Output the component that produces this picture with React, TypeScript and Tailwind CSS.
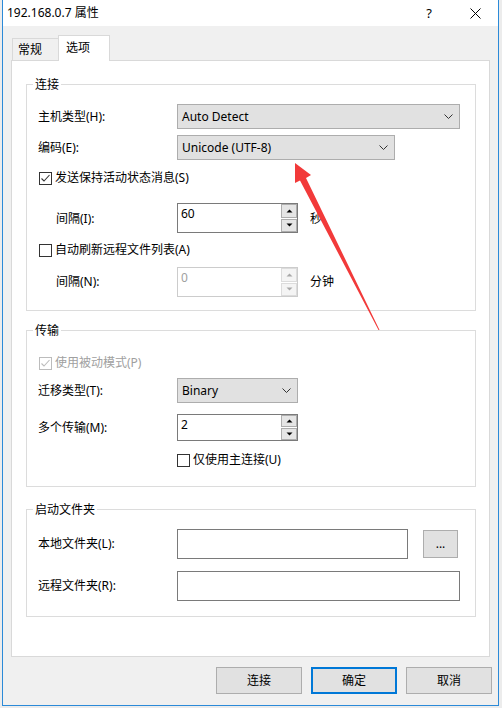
import clsx from "clsx";

const Chevron = ({ color = "#333" }: { color?: string }) => (
  <svg width="9" height="5" viewBox="0 0 9 5" className="shrink-0">
    <path d="M0.5 0.5 L4.5 4.5 L8.5 0.5" fill="none" stroke={color} strokeWidth="1" />
  </svg>
);

function Combo({ value, width }: { value: string; width: string }) {
  return (
    <div
      className={clsx(
        "h-[25px] flex items-center justify-between pl-[4px] pr-[6px] bg-[#e1e1e1] border border-[#adadad]",
        width
      )}
    >
      <span>{value}</span>
      <Chevron />
    </div>
  );
}

function Tri({ up, color }: { up?: boolean; color: string }) {
  return (
    <svg width="7" height="4" viewBox="0 0 7 4">
      <polygon points={up ? "0.5,3.5 3.5,0.5 6.5,3.5" : "0.5,0.5 3.5,3.5 6.5,0.5"} fill={color} />
    </svg>
  );
}

function Spin({ value, height, disabled }: { value: string; height: string; disabled?: boolean }) {
  const btn = disabled
    ? "bg-[#f4f4f4] border-[#dcdcdc]"
    : "bg-[#e5e5e5] border-[#adadad]";
  const tri = disabled ? "#a8a8a8" : "#000";
  return (
    <div
      className={clsx(
        "w-[121px] flex border bg-white",
        height,
        disabled ? "border-[#cccccc] text-[#a0a0a0]" : "border-[#7a7a7a]"
      )}
    >
      <div className="flex-1 pl-[3px] pt-[2px]">{value}</div>
      <div className="w-[16px] flex flex-col gap-[1px]">
        <div className={clsx("flex-1 flex items-center justify-center border", btn)}>
          <Tri up color={tri} />
        </div>
        <div className={clsx("flex-1 flex items-center justify-center border", btn)}>
          <Tri color={tri} />
        </div>
      </div>
    </div>
  );
}

function Check({ checked, disabled, label }: { checked?: boolean; disabled?: boolean; label: string }) {
  const c = disabled ? "#bcbcbc" : "#333";
  return (
    <div className={clsx("flex items-center h-[16px]", disabled && "text-[#a0a0a0]")}>
      <div
        className={clsx(
          "w-[13px] h-[13px] border bg-white flex items-center justify-center",
          disabled ? "border-[#bcbcbc]" : "border-[#333333]"
        )}
      >
        {checked && (
          <svg width="11" height="11" viewBox="0 0 11 11">
            <path d="M1.5 5.5 L4 8 L9.5 2" fill="none" stroke={c} strokeWidth="1.1" />
          </svg>
        )}
      </div>
      <span className="ml-[3px]">{label}</span>
    </div>
  );
}

function Group({ title, className, children }: { title: string; className?: string; children: React.ReactNode }) {
  return (
    <div className={clsx("relative ml-[14px] w-[450px] border border-[#dcdcdc] pl-[11px]", className)}>
      <span className="absolute left-[6px] top-[-8px] bg-white px-[2px] leading-[16px]">{title}</span>
      {children}
    </div>
  );
}

function Btn({ label, primary }: { label: string; primary?: boolean }) {
  return (
    <div
      className={clsx(
        "w-[86px] h-[27px] flex items-center justify-center bg-[#e1e1e1]",
        primary ? "border-2 border-[#0078d7]" : "border border-[#adadad]"
      )}
    >
      {label}
    </div>
  );
}

export default function App() {
  return (
    <div className="relative w-[502px] h-[708px] bg-[#ececec] text-[12px] leading-[16px] text-black font-['Noto_Sans','Noto_Sans_CJK_SC',sans-serif] overflow-hidden">
      <div className="ml-[2px] w-[497px] h-[706px] flex flex-col bg-[#f0f0f0] border-x border-b border-[#2b8ad8]">
        {/* title bar */}
        <div className="h-[26px] bg-white flex items-center shrink-0">
          <span className="pl-[4px] flex-1">192.168.0.7 属性</span>
          <div className="w-[46px] text-center text-[13px]">?</div>
          <div className="w-[46px] flex justify-center">
            <svg width="11" height="11" viewBox="0 0 11 11">
              <path d="M0.5 0.5 L10.5 10.5 M10.5 0.5 L0.5 10.5" stroke="#000" strokeWidth="1" />
            </svg>
          </div>
        </div>

        {/* tabs */}
        <div className="mt-[9px] h-[25px] ml-[9px] flex items-end shrink-0">
          <div className="w-[46px] h-[22px] pl-[5px] flex items-center border-l border-t border-[#d9d9d9]">
            常规
          </div>
          <div className="relative z-10 w-[52px] h-[26px] mb-[-1px] pl-[7px] pb-[2px] flex items-center bg-white border-x border-t border-[#d9d9d9]">
            选项
          </div>
        </div>

        {/* tab panel */}
        <div className="ml-[8px] w-[479px] h-[597px] shrink-0 bg-white border border-[#d9d9d9] flex flex-col">
          <Group title="连接" className="mt-[23px] pb-[13px]">
            <div className="mt-[19px] flex items-center">
              <div className="w-[139px]">主机类型(H):</div>
              <Combo value="Auto Detect" width="w-[283px]" />
            </div>
            <div className="mt-[6px] flex items-center">
              <div className="w-[139px]">编码(E):</div>
              <Combo value="Unicode (UTF-8)" width="w-[218px]" />
            </div>
            <div className="mt-[10px] ml-[1px]">
              <Check checked label="发送保持活动状态消息(S)" />
            </div>
            <div className="mt-[17px] flex items-center">
              <div className="w-[139px] pl-[18px] pt-[2px]">间隔(I):</div>
              <Spin value="60" height="h-[30px]" />
              <span className="ml-[12px] pt-[2px]">秒</span>
            </div>
            <div className="mt-[9px] ml-[1px]">
              <Check label="自动刷新远程文件列表(A)" />
            </div>
            <div className="mt-[9px] flex items-center">
              <div className="w-[139px] pl-[18px]">间隔(N):</div>
              <Spin value="0" height="h-[30px]" disabled />
              <span className="ml-[12px]">分钟</span>
            </div>
          </Group>

          <Group title="传输" className="mt-[19px] pb-[18px]">
            <div className="mt-[24px] ml-[1px]">
              <Check checked disabled label="使用被动模式(P)" />
            </div>
            <div className="mt-[7px] flex items-center">
              <div className="w-[139px]">迁移类型(T):</div>
              <Combo value="Binary" width="w-[121px]" />
            </div>
            <div className="mt-[11px] flex items-center">
              <div className="w-[139px]">多个传输(M):</div>
              <Spin value="2" height="h-[27px]" />
            </div>
            <div className="mt-[11px] ml-[139px]">
              <Check label="仅使用主连接(U)" />
            </div>
          </Group>

          <Group title="启动文件夹" className="mt-[22px] pb-[15px]">
            <div className="mt-[19px] flex items-center">
              <div className="w-[139px]">本地文件夹(L):</div>
              <div className="w-[231px] h-[30px] bg-white border border-[#7a7a7a]" />
              <div className="ml-[15px] w-[35px] h-[28px] flex items-center justify-center bg-[#e1e1e1] border border-[#adadad] leading-[10px]">
                ...
              </div>
            </div>
            <div className="mt-[12px] flex items-center">
              <div className="w-[139px]">远程文件夹(R):</div>
              <div className="w-[283px] h-[30px] bg-white border border-[#7a7a7a]" />
            </div>
          </Group>
        </div>

        {/* buttons */}
        <div className="mt-[10px] ml-[213px] flex gap-[9px] shrink-0">
          <Btn label="连接" />
          <Btn label="确定" primary />
          <Btn label="取消" />
        </div>
      </div>

      {/* red annotation arrow */}
      <svg
        className="absolute inset-0 pointer-events-none"
        width="502"
        height="708"
        viewBox="0 0 502 708"
      >
        <polygon
          points="295,163 311,175 306,178 379.5,330 378.5,330 300,180.5 295,183"
          fill="#f23a3a"
        />
      </svg>
    </div>
  );
}
